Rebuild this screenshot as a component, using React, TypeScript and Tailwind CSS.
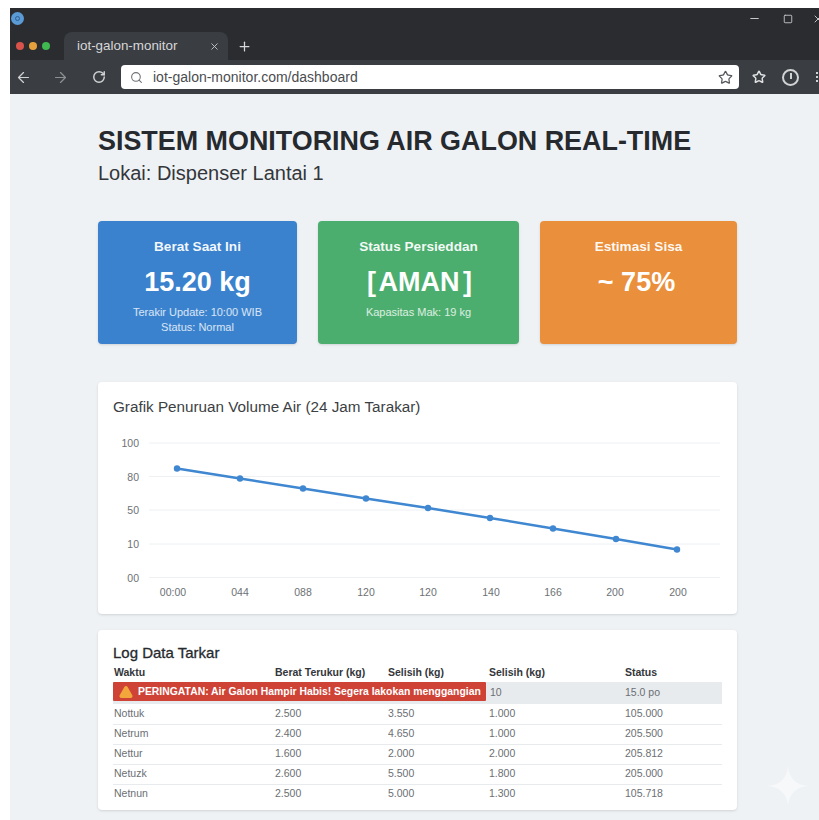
import { ArrowLeft, ArrowRight, Minus, Plus, RotateCw, Search, Square, Star, TriangleAlert, X } from "lucide-react";

const font = "font-['Liberation_Sans',Arial,sans-serif]";

const gridLines = [
	{ y: 443, label: "100" },
	{ y: 476.5, label: "80" },
	{ y: 510, label: "50" },
	{ y: 544, label: "10" },
	{ y: 577.5, label: "00" },
];

const points = [
	{ x: 177, y: 468.5, label: "00:00", labelX: 173 },
	{ x: 240, y: 478.5, label: "044", labelX: 240 },
	{ x: 303, y: 488.5, label: "088", labelX: 303 },
	{ x: 366, y: 498.5, label: "120", labelX: 366 },
	{ x: 428, y: 508, label: "120", labelX: 428 },
	{ x: 490, y: 518, label: "140", labelX: 491 },
	{ x: 553, y: 528.5, label: "166", labelX: 553 },
	{ x: 616, y: 539, label: "200", labelX: 615 },
	{ x: 677, y: 549.5, label: "200", labelX: 678 },
];

const rows = [
	["Nottuk", "2.500", "3.550", "1.000", "105.000"],
	["Netrum", "2.400", "4.650", "1.000", "205.500"],
	["Nettur", "1.600", "2.000", "2.000", "205.812"],
	["Netuzk", "2.600", "5.500", "1.800", "205.000"],
	["Netnun", "2.500", "5.000", "1.300", "105.718"],
];

const BrowserChrome = () => {
	return (
		<div className="shrink-0">
			<div className="relative h-[52px] bg-[#2a2c30]">
				<div className="pl-[1px] pt-[4px]">
					<div className="flex h-[13px] w-[13px] items-center justify-center rounded-full bg-[#5b9bd5]">
						<div className="h-[5px] w-[5px] rounded-full border border-[#2f5f92]" />
					</div>
				</div>
				<div className="absolute right-0 top-[4px] flex items-center text-[#c4c6c8]">
					<Minus size={13} strokeWidth={2} />
					<Square size={10} strokeWidth={2.2} className="ml-[22px]" />
					<X size={12} strokeWidth={2} className="-mr-[5px] ml-[19px]" />
				</div>
				<div className="absolute bottom-0 left-0 flex h-[28px] items-center">
					<div className="flex gap-[5px] pl-[6px]">
						<span className="h-[8px] w-[8px] rounded-full bg-[#d9534a]" />
						<span className="h-[8px] w-[8px] rounded-full bg-[#e5a03c]" />
						<span className="h-[8px] w-[8px] rounded-full bg-[#3fb950]" />
					</div>
					<div className="ml-[14px] flex h-[28px] w-[164px] items-center rounded-t-lg bg-[#3a3d41] pl-[13px] pr-[8px] text-[13.4px] text-[#d6d7d9]">
						<span>iot-galon-monitor</span>
						<X size={11} strokeWidth={2} className="ml-auto text-[#c4c6c8]" />
					</div>
					<Plus size={15} strokeWidth={2} className="ml-[9px] text-[#d6d7d9]" />
				</div>
			</div>
			<div className="flex h-[34px] items-center bg-[#3a3d41] text-[#d0d2d4]">
				<ArrowLeft size={17} strokeWidth={1.75} className="ml-[5px]" />
				<ArrowRight size={17} strokeWidth={1.75} className="ml-[20px] text-[#8e9194]" />
				<RotateCw size={14} strokeWidth={2.5} className="ml-[23px]" />
				<div className="ml-[15px] flex h-[24px] w-[618px] items-center rounded-[4px] bg-white pl-[9px] pr-[6px] text-[14px] text-[#4a4d50]">
					<Search size={13} strokeWidth={2} className="text-[#6f7275]" />
					<span className="ml-[10px]">iot-galon-monitor.com/dashboard</span>
					<Star size={15} strokeWidth={2} className="ml-auto text-[#55585b]" />
				</div>
				<Star size={14} strokeWidth={2.5} className="ml-[13px] text-[#e0e1e3]" />
				<div className="relative ml-[16px] h-[17px] w-[17px] rounded-full border-2 border-[#d0d2d4]">
					<span className="absolute left-[5.5px] top-[2px] h-[6px] w-[2px] bg-[#d0d2d4]" />
				</div>
				<div className="ml-[17px] flex flex-col gap-[2px]">
					<span className="h-[2px] w-[2px] bg-[#d0d2d4]" />
					<span className="h-[2px] w-[2px] bg-[#d0d2d4]" />
					<span className="h-[2px] w-[2px] bg-[#d0d2d4]" />
				</div>
			</div>
		</div>
	);
};

interface StatCardProps {
	title: string;
	value: string;
	notes: string[];
	color: string;
	width: string;
	valueClass?: string;
}

const StatCard = ({ title, value, notes, color, width, valueClass = "" }: StatCardProps) => {
	return (
		<div className={`flex h-[123px] flex-col items-center rounded-[4px] pt-[17px] text-white shadow-sm ${color} ${width}`}>
			<h2 className="text-[13.6px] font-bold leading-[18px] text-white/95">{title}</h2>
			<p className={`mt-[10px] text-[27px] font-bold leading-[32px] ${valueClass}`}>{value}</p>
			<div className="mt-[7px] text-center text-[11px] leading-[15px] text-white/80">
				{notes.map((note) => (
					<p key={note}>{note}</p>
				))}
			</div>
		</div>
	);
};

const VolumeChart = () => {
	return (
		<svg width="639" height="180" viewBox="98 432 639 180" className="mt-[15px] block text-[10.5px]">
			{gridLines.map((line) => (
				<g key={line.y}>
					<line x1="149" x2="720" y1={line.y} y2={line.y} stroke="#eef0f2" strokeWidth="1" />
					<text x="139" y={line.y + 4} textAnchor="end" fill="#6d7175">
						{line.label}
					</text>
				</g>
			))}
			<polyline
				points={points.map((p) => `${p.x},${p.y}`).join(" ")}
				fill="none"
				stroke="#3f87d0"
				strokeWidth="2.5"
			/>
			{points.map((p) => (
				<circle key={p.x} cx={p.x} cy={p.y} r="3.2" fill="#3f87d0" />
			))}
			{points.map((p) => (
				<text key={p.x} x={p.labelX} y="596" textAnchor="middle" fill="#6d7175">
					{p.label}
				</text>
			))}
		</svg>
	);
};

const LogTable = () => {
	return (
		<div className="relative ml-[15px] mt-px w-[609px]">
			<table className="w-full table-fixed border-collapse text-[10.5px]">
				<colgroup>
					<col className="w-[162px]" />
					<col className="w-[113px]" />
					<col className="w-[101px]" />
					<col className="w-[136px]" />
					<col />
				</colgroup>
				<thead>
					<tr className="h-[19px] text-left font-bold text-[#33363a]">
						<th className="pl-px font-bold">Waktu</th>
						<th className="font-bold">Berat Terukur (kg)</th>
						<th className="font-bold">Selisih (kg)</th>
						<th className="font-bold">Selisih (kg)</th>
						<th className="font-bold">Status</th>
					</tr>
				</thead>
				<tbody className="text-[#6b6f73]">
					<tr className="h-[22px] bg-[#e8ebee]">
						<td />
						<td />
						<td />
						<td className="pl-[1px]">10</td>
						<td>15.0 po</td>
					</tr>
					{rows.map((row) => (
						<tr key={row[0]} className="h-[20px] border-b border-[#e8ebee] last:h-[19px] last:border-b-0">
							{row.map((cell, i) => (
								<td key={`${row[0]}-${i}`} className={i === 0 ? "pl-px" : ""}>
									{cell}
								</td>
							))}
						</tr>
					))}
				</tbody>
			</table>
			<div className="absolute left-0 top-[19px] flex h-[19px] w-[373px] items-center rounded-[1px] bg-[#cf4236] pl-[6px] text-[10.4px] font-bold text-white">
				<TriangleAlert size={14} strokeWidth={2.5} className="fill-[#f2a63c] text-[#f2a63c]" />
				<span className="ml-[5px] whitespace-nowrap">PERINGATAN: Air Galon Hampir Habis! Segera lakokan menggangian</span>
			</div>
		</div>
	);
};

export default function App() {
	return (
		<div className={`h-[820px] overflow-hidden bg-white pl-[10px] pt-[8px] ${font}`}>
			<div className="flex h-[812px] flex-col bg-[#eff2f5]">
				<BrowserChrome />
				<main className="relative flex-1 pl-[88px] pr-[82px]">
					<h1 className="mt-[30px] whitespace-nowrap text-[26.9px] font-bold leading-[34px] text-[#26292d]">
						SISTEM MONITORING AIR GALON REAL-TIME
					</h1>
					<p className="mt-[2px] text-[20px] leading-[26px] text-[#33363a]">Lokai: Dispenser Lantai 1</p>

					<div className="mt-[35px] flex justify-between">
						<StatCard
							title="Berat Saat Ini"
							value="15.20 kg"
							notes={["Terakir Update: 10:00 WIB", "Status: Normal"]}
							color="bg-[#3a82cd]"
							width="w-[199px]"
						/>
						<StatCard
							title="Status Persieddan"
							value="[ AMAN ]"
							notes={["Kapasitas Mak: 19 kg"]}
							color="bg-[#4cae6e]"
							width="w-[201px]"
							valueClass="[word-spacing:-4px] pl-[2px]"
						/>
						<StatCard
							title="Estimasi Sisa"
							value="~ 75%"
							notes={[]}
							color="bg-[#ea8f3c]"
							width="w-[197px]"
							valueClass="pr-[4px]"
						/>
					</div>

					<section className="mt-[38px] h-[232px] rounded-[4px] bg-white pt-[15px] shadow-sm">
						<h2 className="pl-[15px] text-[15.25px] leading-[20px] text-[#3c3f43]">
							Grafik Penuruan Volume Air (24 Jam Tarakar)
						</h2>
						<VolumeChart />
					</section>

					<section className="mt-[16px] h-[180px] rounded-[4px] bg-white pt-[14px] shadow-sm">
						<h2 className="pl-[15px] text-[15px] font-normal leading-[18px] text-[#26292d] [-webkit-text-stroke:0.3px_#26292d]">
							Log Data Tarkar
						</h2>
						<LogTable />
					</section>

					{/* corner sparkle */}
					<svg width="40" height="40" viewBox="0 0 40 40" className="absolute right-[11px] top-[672px]">
						<path d="M20 0C21 12 28 19 40 20C28 21 21 28 20 40C19 28 12 21 0 20C12 19 19 12 20 0Z" fill="#f6f8fa" />
					</svg>
				</main>
			</div>
		</div>
	);
}
